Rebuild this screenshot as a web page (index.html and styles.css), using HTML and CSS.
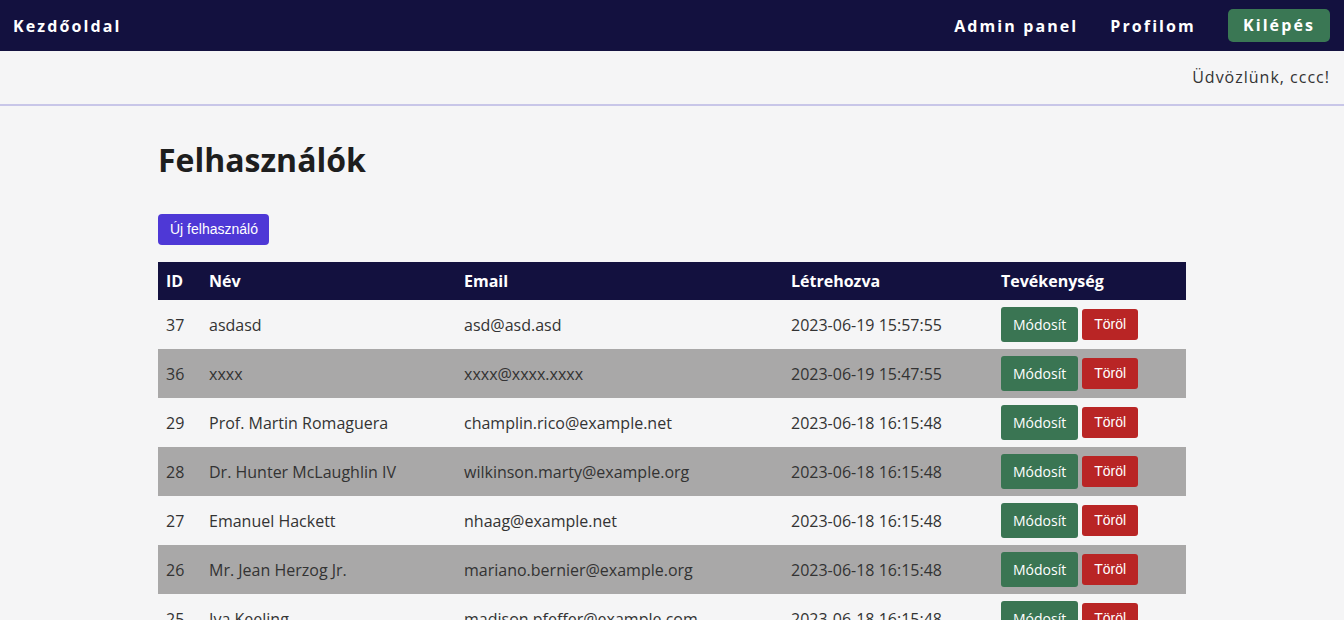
FILE: index.html
```html
<!DOCTYPE html>
<html lang="hu">
<head>
<meta charset="utf-8">
<title>Felhasználók</title>
<link rel="stylesheet" href="styles.css">
</head>
<body>
<nav class="navbar">
  <a class="brand" href="#">Kezdőoldal</a>
  <div class="nav-right">
    <a class="nav-link" href="#">Admin panel</a>
    <a class="nav-link" href="#">Profilom</a>
    <a class="logout" href="#">Kilépés</a>
  </div>
</nav>
<div class="welcome">Üdvözlünk, cccc!</div>
<main class="container">
  <h1 class="title">Felhasználók</h1>
  <a class="btn-new" href="#">Új felhasználó</a>
  <table class="users">
    <thead>
      <tr><th class="c-id">ID</th><th class="c-name">Név</th><th class="c-email">Email</th><th class="c-date">Létrehozva</th><th>Tevékenység</th></tr>
    </thead>
    <tbody>
      <tr><td>37</td><td>asdasd</td><td>asd@asd.asd</td><td>2023-06-19 15:57:55</td><td class="actions"><a class="btn-edit" href="#">Módosít</a><button class="btn-del">Töröl</button></td></tr>
      <tr><td>36</td><td>xxxx</td><td>xxxx@xxxx.xxxx</td><td>2023-06-19 15:47:55</td><td class="actions"><a class="btn-edit" href="#">Módosít</a><button class="btn-del">Töröl</button></td></tr>
      <tr><td>29</td><td>Prof. Martin Romaguera</td><td>champlin.rico@example.net</td><td>2023-06-18 16:15:48</td><td class="actions"><a class="btn-edit" href="#">Módosít</a><button class="btn-del">Töröl</button></td></tr>
      <tr><td>28</td><td>Dr. Hunter McLaughlin IV</td><td>wilkinson.marty@example.org</td><td>2023-06-18 16:15:48</td><td class="actions"><a class="btn-edit" href="#">Módosít</a><button class="btn-del">Töröl</button></td></tr>
      <tr><td>27</td><td>Emanuel Hackett</td><td>nhaag@example.net</td><td>2023-06-18 16:15:48</td><td class="actions"><a class="btn-edit" href="#">Módosít</a><button class="btn-del">Töröl</button></td></tr>
      <tr><td>26</td><td>Mr. Jean Herzog Jr.</td><td>mariano.bernier@example.org</td><td>2023-06-18 16:15:48</td><td class="actions"><a class="btn-edit" href="#">Módosít</a><button class="btn-del">Töröl</button></td></tr>
      <tr><td>25</td><td>Iva Keeling</td><td>madison.pfeffer@example.com</td><td>2023-06-18 16:15:48</td><td class="actions"><a class="btn-edit" href="#">Módosít</a><button class="btn-del">Töröl</button></td></tr>
    </tbody>
  </table>
</main>
</body>
</html>
```

FILE: styles.css
```css
* { box-sizing: border-box; }
body {
  margin: 0;
  background: #f5f5f6;
  font-family: "Open Sans", "Liberation Sans", sans-serif;
  color: #333;
}
a { text-decoration: none; }
.navbar {
  height: 51px;
  background: #13113f;
  display: flex;
  align-items: center;
  justify-content: space-between;
  padding: 0 14px 0 13px;
}
.brand, .nav-link, .logout {
  color: #fff;
  font-weight: 700;
  font-size: 16px;
  letter-spacing: 2.1px;
}
.nav-right {
  display: flex;
  align-items: center;
}
.nav-link { margin-right: 32px; }
.logout {
  background: #3a7754;
  border-radius: 5px;
  padding: 5px 15px 6px 15px;
  line-height: 22px;
}
.welcome {
  height: 55px;
  border-bottom: 2px solid #c8c6e8;
  text-align: right;
  padding: 15px 14px 0 0;
  font-size: 16px;
  letter-spacing: 1px;
  color: #333;
  line-height: 22px;
}
.container {
  width: 1028px;
  margin: 0 auto;
  padding-top: 32px;
}
.title {
  margin: 0;
  font-size: 32px;
  line-height: 44px;
  font-weight: 700;
  color: #1e1e1e;
}
.btn-new {
  display: inline-block;
  margin-top: 32px;
  background: #4e38d6;
  color: #fff;
  font-family: "Liberation Sans", Arial, sans-serif;
  font-size: 14px;
  line-height: 17px;
  padding: 7px 11px 7px 12px;
  border-radius: 4px;
}
.users {
  width: 100%;
  margin-top: 17px;
  border-collapse: collapse;
}
.users th {
  background: #13113f;
  color: #fff;
  text-align: left;
  font-size: 16px;
  font-weight: 700;
  height: 38px;
  padding: 0 8px;
}
.users td {
  height: 49px;
  padding: 0 8px;
  font-size: 16px;
  color: #333;
}
.c-id { width: 43px; }
.c-name { width: 255px; }
.c-email { width: 327px; }
.c-date { width: 210px; }
.users tbody tr:nth-child(even) td { background: #a9a8a8; }
.actions { white-space: nowrap; }
.btn-edit {
  display: inline-block;
  vertical-align: middle;
  background: #3a7553;
  color: #fff;
  font-size: 14px;
  line-height: 19px;
  padding: 8px 12px;
  border-radius: 3px;
}
.btn-del {
  vertical-align: middle;
  margin-left: 4px;
  background: #b92525;
  color: #fff;
  border: 0;
  font-family: "Liberation Sans", Arial, sans-serif;
  font-size: 14px;
  line-height: 17px;
  padding: 7px 12px;
  border-radius: 3px;
}
```
